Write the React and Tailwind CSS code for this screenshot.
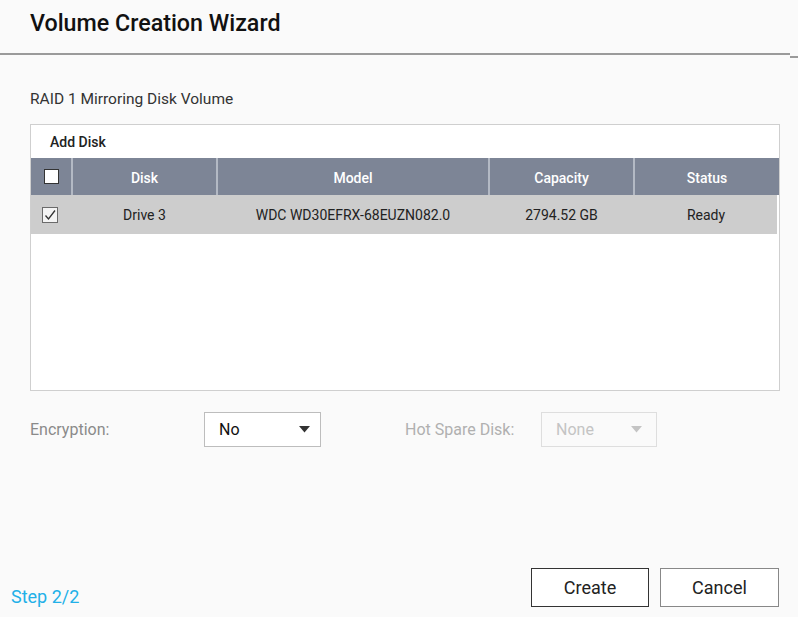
import React from "react";

function Checkbox({ checked }) {
  if (checked) {
    return (
      <div className="w-[16px] h-[16px] border border-[#6b6b6b] bg-[#f4f4f4] flex items-center justify-center">
        <svg width="14" height="14" viewBox="0 0 14 14">
          <path d="M2.5 7.5 L5.5 11 L12 2.5" fill="none" stroke="#333" strokeWidth="1.3" />
        </svg>
      </div>
    );
  }
  return <div className="w-[15px] h-[15px] border-[1.5px] border-[#333] bg-white" />;
}

function Caret({ color }) {
  return (
    <svg width="11" height="7" viewBox="0 0 11 7">
      <path d="M0 0 L11 0 L5.5 6.5 Z" fill={color} />
    </svg>
  );
}

export default function App() {
  return (
    <div
      className="w-[798px] h-[617px] bg-[#fafafa] flex flex-col overflow-hidden"
      style={{ fontFamily: "Roboto, 'Noto Sans', sans-serif" }}
    >
      <div className="h-[53px] flex items-start pl-[30px] pt-[7px]">
        <span className="text-[23.25px] font-medium text-[#111] leading-[32px]">Volume Creation Wizard</span>
      </div>
      <div className="flex h-[2px] items-start">
        <div className="w-[790px] h-[2px] bg-[#9a9a9a]" />
        <div className="w-[8px] h-[2px] bg-[#9a9a9a] mt-[3px]" />
      </div>
      <div className="pl-[30px] pt-[34px] text-[15.5px] text-[#333] leading-[20px]">RAID 1 Mirroring Disk Volume</div>
      <div className="ml-[30px] mt-[15px] w-[750px] h-[267px] border border-[#cfcfcf] bg-white flex flex-col">
        <div className="h-[33px] flex items-center pl-[19px] pt-[2px] text-[14px] font-medium text-[#222]">Add Disk</div>
        <div className="h-[37px] bg-[#7d8596] flex text-white text-[14px] font-medium">
          <div className="w-[40px] flex items-center justify-center">
            <Checkbox />
          </div>
          <div className="w-[2px] bg-[#b3b9c4]" />
          <div className="w-[143px] flex items-center justify-center pt-[3px]">Disk</div>
          <div className="w-[2px] bg-[#b3b9c4]" />
          <div className="w-[270px] flex items-center justify-center pt-[3px]">Model</div>
          <div className="w-[2px] bg-[#b3b9c4]" />
          <div className="w-[143px] flex items-center justify-center pt-[3px]">Capacity</div>
          <div className="w-[2px] bg-[#b3b9c4]" />
          <div className="flex-1 flex items-center justify-center pt-[3px]">Status</div>
        </div>
        <div className="h-[39px] bg-[#cdcdcd] flex text-[14px] text-[#222] mr-[2px]">
          <div className="w-[40px] flex items-center justify-center pr-[2px]">
            <Checkbox checked />
          </div>
          <div className="w-[2px]" />
          <div className="w-[143px] flex items-center justify-center pt-[2px]">Drive 3</div>
          <div className="w-[2px]" />
          <div className="w-[270px] flex items-center justify-center pt-[2px]">WDC WD30EFRX-68EUZN082.0</div>
          <div className="w-[2px]" />
          <div className="w-[143px] flex items-center justify-center pt-[2px]">2794.52 GB</div>
          <div className="w-[2px]" />
          <div className="flex-1 flex items-center justify-center pt-[2px]">Ready</div>
        </div>
      </div>
      <div className="mt-[21px] h-[35px] flex items-center text-[16px]">
        <div className="w-[204px] pl-[30px] text-[#8a8a8a]">Encryption:</div>
        <div className="w-[117px] h-[35px] border border-[#bdbdbd] bg-white flex items-center justify-between pl-[14px] pr-[10px] text-[#111]">
          <span>No</span>
          <Caret color="#333" />
        </div>
        <div className="w-[84px]" />
        <div className="w-[136px] text-[#b0b0b0]">Hot Spare Disk:</div>
        <div className="w-[116px] h-[35px] border border-[#dedede] bg-[#fafafa] flex items-center justify-between pl-[14px] pr-[14px] text-[#c4c4c4]">
          <span>None</span>
          <Caret color="#c4c4c4" />
        </div>
      </div>
      <div className="flex-1" />
      <div className="h-[60px] flex items-start">
        <div className="pl-[11px] pt-[28px] text-[18px] leading-[24px] text-[#22b0e8]">Step 2/2</div>
        <div className="flex-1" />
        <div className="flex gap-[11px] pr-[19px] pt-[11px]">
          <button className="w-[118px] h-[39px] border-[1.5px] border-[#333] bg-white text-[18px] text-[#222]">Create</button>
          <button className="w-[119px] h-[39px] border-[1.5px] border-[#888] bg-white text-[18px] text-[#222]">Cancel</button>
        </div>
      </div>
    </div>
  );
}
